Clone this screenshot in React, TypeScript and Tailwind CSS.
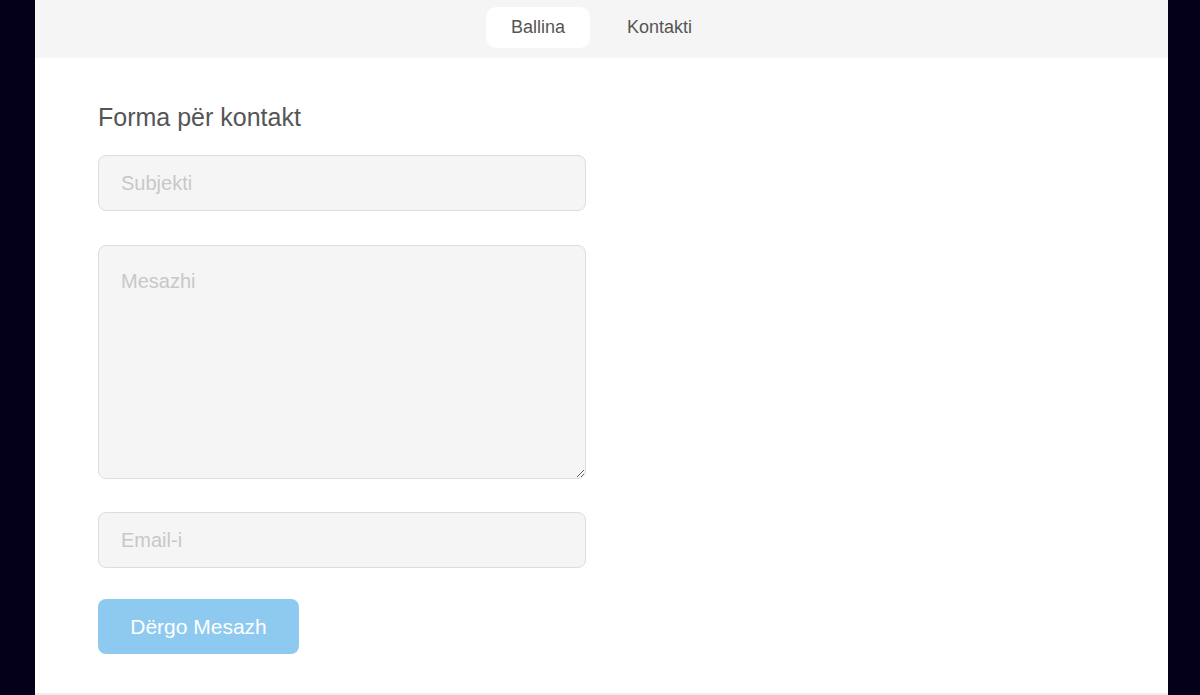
import { useState } from "react";

const App = () => {
  const [active] = useState("Ballina");

  return (
    <div className="flex h-[695px] w-full bg-[#05001a] font-['Liberation_Sans',Arial,sans-serif]">
      <div className="w-[35px] shrink-0" />
      <main className="flex flex-1 flex-col bg-white border-b-2 border-[#eeeeee]">
        {/* Top nav */}
        <header className="flex h-[58px] items-start justify-center gap-3 bg-[#f5f5f5] pt-[7px]">
          {["Ballina", "Kontakti"].map((item) => (
            <a
              key={item}
              href="#"
              className={`flex h-[41px] items-center rounded-[10px] px-[25px] text-[18px] text-[#555555] ${
                active === item ? "bg-white" : ""
              }`}
            >
              {item}
            </a>
          ))}
        </header>

        {/* Contact form */}
        <section className="flex flex-col px-[63px] pt-[45px]">
          <h2 className="text-[25px] leading-[28px] text-[#555555]">Forma për kontakt</h2>
          <form className="mt-[24px] flex w-[488px] flex-col" onSubmit={(e) => e.preventDefault()}>
            <input
              type="text"
              placeholder="Subjekti"
              className="h-[56px] rounded-[8px] border border-[#dddddd] bg-[#f5f5f5] px-[22px] text-[20px] text-[#555555] outline-none placeholder:text-[#c8c8c8]"
            />
            <textarea
              placeholder="Mesazhi"
              className="mt-[34px] h-[234px] rounded-[8px] border border-[#dddddd] bg-[#f5f5f5] px-[22px] pt-[20px] text-[20px] text-[#555555] outline-none placeholder:text-[#c8c8c8]"
            />
            <input
              type="email"
              placeholder="Email-i"
              className="mt-[33px] h-[56px] rounded-[8px] border border-[#dddddd] bg-[#f5f5f5] px-[22px] text-[20px] text-[#555555] outline-none placeholder:text-[#c8c8c8]"
            />
            <button
              type="submit"
              className="mt-[31px] h-[55px] w-[201px] rounded-[8px] bg-[#8ecaf0] text-[21px] text-white"
            >
              Dërgo Mesazh
            </button>
          </form>
        </section>
      </main>
      <div className="w-[32px] shrink-0" />
    </div>
  );
};

export default App;
